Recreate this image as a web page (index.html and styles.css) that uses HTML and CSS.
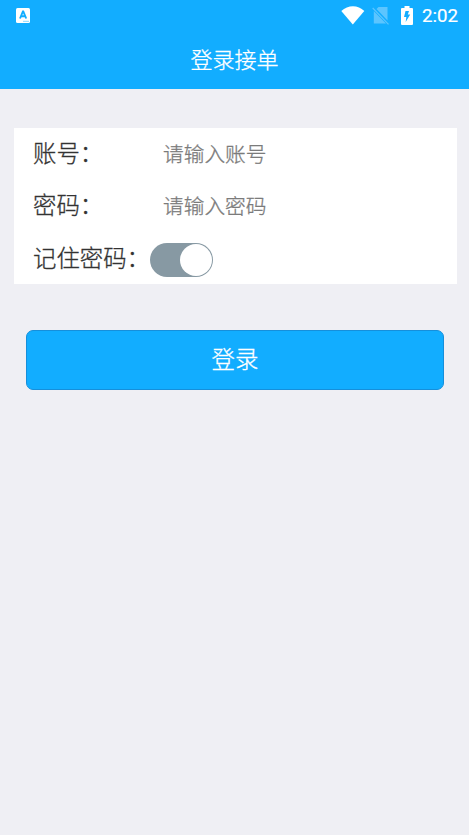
FILE: index.html
```html
<!DOCTYPE html>
<html lang="zh-CN">
<head>
<meta charset="utf-8">
<title>登录接单</title>
<link rel="stylesheet" href="styles.css">
</head>
<body>
<header class="header">
  <div class="status">
    <svg class="app-icon" width="14" height="15" viewBox="0 0 14 15"><rect width="14" height="15" rx="1.5" fill="#fff"/><path d="M4 10.5 6.9 3.5H7.3L10.2 10.5M5.1 8.3H9.1" fill="none" stroke="#12adff" stroke-width="1.9"/><path d="M7.5 13.3h1m1 0h1m1 0h1" stroke="#12adff"/></svg>
    <div class="status-right">
      <svg class="wifi" width="24" height="19" viewBox="0 0 24 19"><path d="M.3 5C7-1.3 17-1.3 23.3 5L11.8 18.5Z" fill="#fff"/></svg>
      <svg class="sim" width="18" height="19" viewBox="0 0 18 19"><path d="M6.5 1H15.5V14.5L4.5 3ZM1.8 5 14 17.5H1.8Z" fill="#5cc5ff"/><path d="M.7 2 16.5 18.3" stroke="#5cc5ff" stroke-width="1.2"/></svg>
      <svg class="battery" width="12" height="19" viewBox="0 0 12 19"><path d="M3.5 0H8.5V2H11Q12 2 12 3V18Q12 19 11 19H1Q0 19 0 18V3Q0 2 1 2H3.5Z" fill="#fff"/><path d="M4.5 5H8L6.8 8.6H9.2L4.7 16 5.3 11H3Z" fill="#12adff"/></svg>
      <span class="time">2:02</span>
    </div>
  </div>
  <h1 class="title">登录接单</h1>
</header>
<main>
  <form class="form">
    <div class="card">
      <label class="row"><span class="label">账号：</span><input class="input" type="text" placeholder="请输入账号"></label>
      <label class="row"><span class="label">密码：</span><input class="input" type="password" placeholder="请输入密码"></label>
      <div class="row"><span class="label label-wide">记住密码：</span><span class="switch"><span class="knob"></span></span></div>
    </div>
    <button class="submit" type="button">登录</button>
  </form>
</main>
</body>
</html>
```

FILE: styles.css
```css
* { box-sizing: border-box; }
body {
  margin: 0;
  min-height: 835px;
  background: #efeff4;
  color: #333;
  font-family: "Noto Sans CJK SC", sans-serif;
}
.header { height: 89px; background: #12adff; color: #fff; }
.status {
  display: flex;
  justify-content: space-between;
  align-items: center;
  height: 31px;
  padding: 0 10px 0 16px;
}
.status-right { display: flex; align-items: center; }
.sim { margin-left: 7px; }
.battery { margin-left: 11px; }
.time {
  width: 37px;
  margin-left: 9px;
  padding-top: 1px;
  font: 400 18.7px/31px Roboto, sans-serif;
  -webkit-text-stroke: 0.2px currentColor;
  white-space: nowrap;
}
.title, .label, .input, .submit { -webkit-text-stroke: 0.3px currentColor; }
.title {
  margin: 0;
  font-size: 22px;
  font-weight: 300;
  line-height: 55px;
  text-align: center;
}
.form { padding: 39px 12px 0 14px; }
.card { background: #fff; }
.row {
  display: flex;
  align-items: center;
  height: 52px;
  padding-left: 19px;
}
.label {
  width: 130px;
  padding-bottom: 3px;
  font-size: 23.4px;
  font-weight: 300;
  line-height: 49px;
  white-space: nowrap;
}
.label-wide { width: 117px; padding-bottom: 1px; }
.input {
  flex: 1;
  min-width: 0;
  padding: 0 0 2px;
  border: 0;
  outline: 0;
  background: transparent;
  color: #333;
  font: 300 20.7px/30px "Noto Sans CJK SC", sans-serif;
}
.input::placeholder { color: #7b7b7b; opacity: 1; }
.switch {
  display: flex;
  justify-content: flex-end;
  width: 63px;
  height: 34px;
  margin-top: 3px;
  padding: 1px;
  border-radius: 17px;
  background: #8799a3;
}
.knob { width: 32px; height: 32px; border-radius: 50%; background: #fff; }
.submit {
  display: block;
  width: 418px;
  height: 60px;
  margin: 46px 0 0 12px;
  padding: 0 0 3px;
  border: 1px solid #168fdb;
  border-radius: 7px;
  background: #12adff;
  color: #fff;
  font: 300 23.4px/55px "Noto Sans CJK SC", sans-serif;
}
```
